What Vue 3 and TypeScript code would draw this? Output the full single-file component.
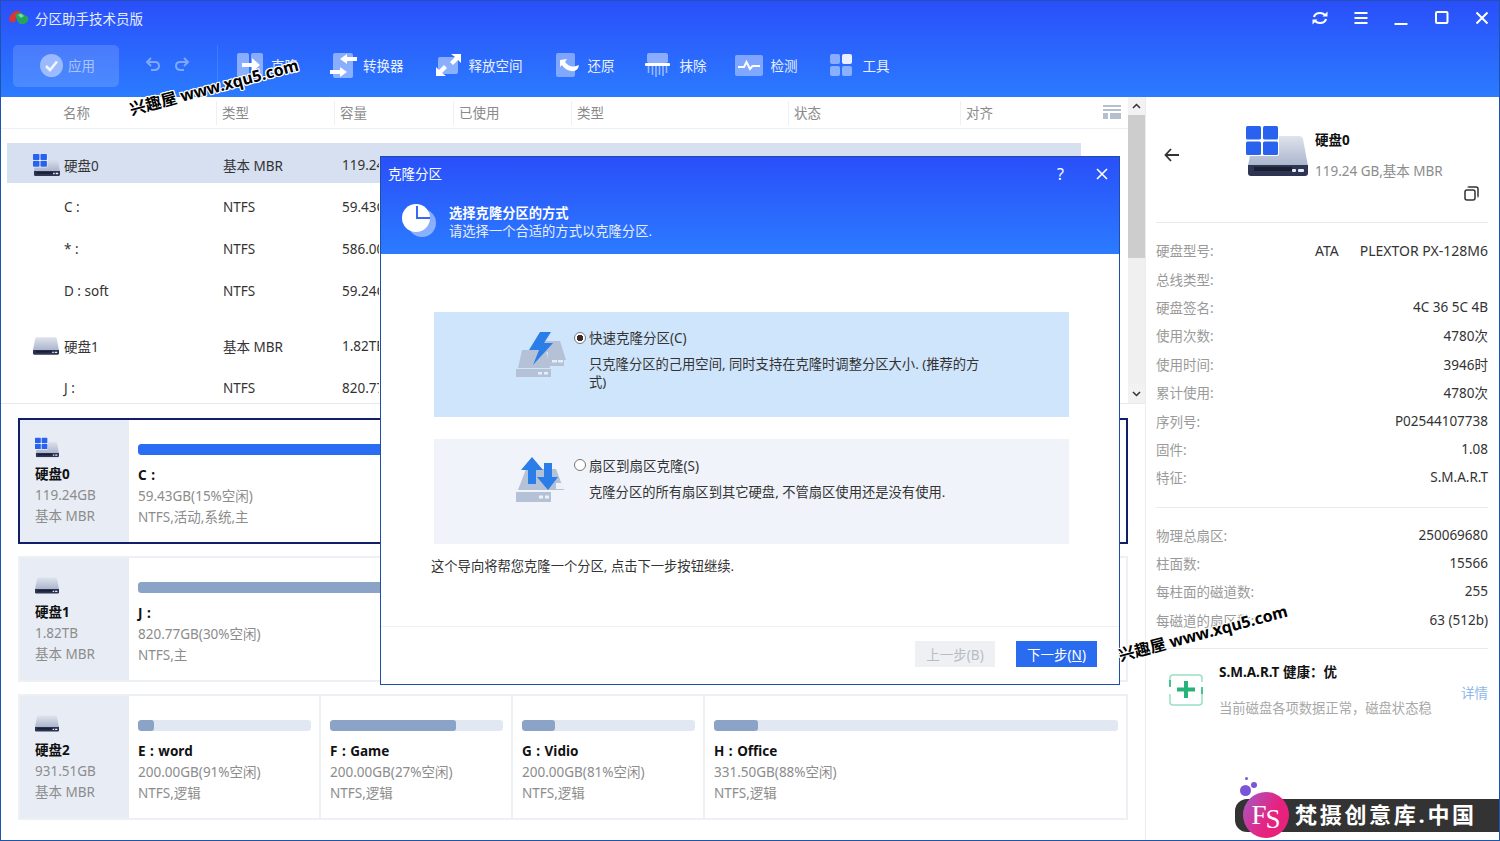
<script setup lang="ts">
const columns = ['名称', '类型', '容量', '已使用', '类型', '状态', '对齐']

const rows = [
  { name: '硬盘0', type: '基本 MBR', size: '119.24GB', icon: 'win', selected: true },
  { name: 'C :', type: 'NTFS', size: '59.43GB' },
  { name: '* :', type: 'NTFS', size: '586.00MB' },
  { name: 'D : soft', type: 'NTFS', size: '59.24GB', last: true },
  { name: '硬盘1', type: '基本 MBR', size: '1.82TB', icon: 'disk' },
  { name: 'J :', type: 'NTFS', size: '820.77GB' },
]

const disks = [
  {
    name: '硬盘0', size: '119.24GB', win: true, selected: true,
    parts: [{ name: 'C :', size: '59.43GB(15%空闲)', info: 'NTFS,活动,系统,主', used: 85, color: '#2a6df4' }],
  },
  {
    name: '硬盘1', size: '1.82TB',
    parts: [{ name: 'J :', size: '820.77GB(30%空闲)', info: 'NTFS,主', used: 70, color: '#8aa3c6' }],
  },
  {
    name: '硬盘2', size: '931.51GB',
    parts: [
      { name: 'E : word', size: '200.00GB(91%空闲)', info: 'NTFS,逻辑', used: 9, color: '#8aa3c6' },
      { name: 'F : Game', size: '200.00GB(27%空闲)', info: 'NTFS,逻辑', used: 73, color: '#8aa3c6' },
      { name: 'G : Vidio', size: '200.00GB(81%空闲)', info: 'NTFS,逻辑', used: 19, color: '#8aa3c6' },
      { name: 'H : Office', size: '331.50GB(88%空闲)', info: 'NTFS,逻辑', used: 11, color: '#8aa3c6' },
    ],
  },
]

const diskInfo = [
  ['硬盘型号:', 'ATA', 'PLEXTOR PX-128M6'],
  ['总线类型:', '', ''],
  ['硬盘签名:', '', '4C 36 5C 4B'],
  ['使用次数:', '', '4780次'],
  ['使用时间:', '', '3946时'],
  ['累计使用:', '', '4780次'],
  ['序列号:', '', 'P02544107738'],
  ['固件:', '', '1.08'],
  ['特征:', '', 'S.M.A.R.T'],
]

const geometry = [
  ['物理总扇区:', '250069680'],
  ['柱面数:', '15566'],
  ['每柱面的磁道数:', '255'],
  ['每磁道的扇区数:', '63 (512b)'],
]
</script>

<template>
  <div class="window">
    <!-- shared drive drawings -->
    <svg class="defs" width="0" height="0">
      <defs>
        <linearGradient id="diskBody" x1="0" y1="0" x2="0" y2="1">
          <stop offset="0" stop-color="#dfe3ec" />
          <stop offset="1" stop-color="#a9b4cc" />
        </linearGradient>
        <symbol id="disk" viewBox="0 0 60 40">
          <path d="M9 0H51Q54 0 55 3L60 30H0L5 3Q6 0 9 0Z" fill="url(#diskBody)" />
          <path d="M0 29H60V37Q60 40 57 40H3Q0 40 0 37Z" fill="#2e3552" />
          <rect x="6" y="31" width="38" height="4" fill="#1a1f33" />
          <rect x="44" y="33" width="4" height="3" rx="1" fill="#e8ebf2" />
          <rect x="50" y="33" width="6" height="3" rx="1" fill="#e8ebf2" />
        </symbol>
        <symbol id="diskWin" viewBox="0 0 62 50">
          <use href="#disk" x="2" y="10" width="60" height="40" />
          <rect x="0" y="0" width="33" height="30" rx="2" fill="#fff" />
          <rect x="0" y="0" width="15" height="13.5" rx="1.5" fill="#2a62f0" />
          <rect x="17" y="0" width="15" height="13.5" rx="1.5" fill="#2a62f0" />
          <rect x="0" y="15.5" width="15" height="13.5" rx="1.5" fill="#2a62f0" />
          <rect x="17" y="15.5" width="15" height="13.5" rx="1.5" fill="#2a62f0" />
        </symbol>
      </defs>
    </svg>

    <header class="top">
      <div class="titlebar">
        <svg class="logo" width="20" height="16" viewBox="0 0 20 16">
          <path d="M0 10Q1 3 7 1Q11 0 12 3L7 7L6 12Q2 13 0 10Z" fill="#e0322f" />
          <path d="M6 5Q10 1 14 4L19 7Q20 11 17 13Q12 16 9 12Z" fill="#23a55a" />
          <path d="M9 5L12 3.500L15 6L12 8Z" fill="#7fd6a0" />
        </svg>
        <span class="app-name">分区助手技术员版</span>
        <div class="controls">
          <svg width="18" height="18" viewBox="0 0 18 18" fill="none" stroke="#fff" stroke-width="2.200">
            <path d="M3 8Q4 4 9 4Q12 4 14 6" />
            <path d="M15 10Q14 14 9 14Q6 14 4 12" />
            <path d="M11.500 7.500H16.500V2.500Z" fill="#fff" stroke="none" />
            <path d="M6.500 10.500H1.500V15.500Z" fill="#fff" stroke="none" />
          </svg>
          <svg width="18" height="18" viewBox="0 0 18 18" stroke="#fff" stroke-width="2">
            <path d="M2.500 4H15.500M2.500 9H15.500M2.500 14H15.500" />
          </svg>
          <svg width="18" height="18" viewBox="0 0 18 18" stroke="#fff" stroke-width="2">
            <path d="M2.500 15H15.500" />
          </svg>
          <svg width="18" height="18" viewBox="0 0 18 18" fill="none" stroke="#fff" stroke-width="2">
            <rect x="3" y="3" width="11.500" height="11" rx="1" />
          </svg>
          <svg width="18" height="18" viewBox="0 0 18 18" stroke="#fff" stroke-width="2">
            <path d="M3.500 3.500L14.500 14.500M14.500 3.500L3.500 14.500" />
          </svg>
        </div>
      </div>

      <div class="toolbar">
        <button class="apply">
          <svg width="23" height="23" viewBox="0 0 23 23">
            <circle cx="11.500" cy="11.500" r="11.500" fill="#fff" fill-opacity=".45" />
            <path d="M6 12L10 16L17 7.500" fill="none" stroke="#fff" stroke-opacity=".85" stroke-width="2.600" />
          </svg>
          <span>应用</span>
        </button>
        <div class="history">
          <svg width="16" height="14" viewBox="0 0 16 14" fill="none" stroke="#fff" stroke-opacity=".4" stroke-width="2">
            <path d="M6 1L2 5L6 9M2 5H10Q14 5 14 9Q14 13 9 13H6" />
          </svg>
          <svg width="16" height="14" viewBox="0 0 16 14" fill="none" stroke="#fff" stroke-opacity=".4" stroke-width="2">
            <path d="M10 1L14 5L10 9M14 5H6Q2 5 2 9Q2 13 7 13H10" />
          </svg>
        </div>
        <div class="tool-sep"></div>

        <div class="tools">
          <div class="tool">
            <svg width="26" height="24" viewBox="0 0 26 24">
              <rect x="0" y="0" width="12" height="24" rx="2" fill="#fff" fill-opacity=".45" />
              <rect x="14" y="0" width="12" height="24" rx="2" fill="#fff" fill-opacity=".45" />
              <path d="M5 10H15V5L23 12L15 19V14H5Z" fill="#fff" />
            </svg>
            <span>克隆</span>
          </div>
          <div class="tool convert">
            <svg width="27" height="25" viewBox="0 0 27 25">
              <rect x="3" y="0" width="20" height="25" rx="2" fill="#fff" fill-opacity=".45" />
              <path d="M27 4H17V1L10 6L17 11V8H27Z" fill="#fff" />
              <path d="M0 17H10V14L17 19L10 24V21H0Z" fill="#fff" />
            </svg>
            <span>转换器</span>
          </div>
          <div class="tool">
            <svg width="25" height="22" viewBox="0 0 25 22">
              <rect x="2" y="3" width="20" height="17" rx="2" fill="#fff" fill-opacity=".45" />
              <path d="M15 0H25V9L22 6L17 11L14 8L19 3Z" fill="#fff" />
              <path d="M10 22H0V13L3 16L8 11L11 14L6 19Z" fill="#fff" />
            </svg>
            <span>释放空间</span>
          </div>
          <div class="tool restore">
            <svg width="24" height="24" viewBox="0 0 24 24">
              <rect x="0" y="0" width="19" height="24" rx="2" fill="#fff" fill-opacity=".4" />
              <path d="M4 7L11 6L9 9Q14 15 20 13L23 12Q22 19 15 18Q9 17 6 12L4 14Z" fill="#fff" />
            </svg>
            <span>还原</span>
          </div>
          <div class="tool erase">
            <svg width="25" height="24" viewBox="0 0 25 24">
              <rect x="2" y="0" width="21" height="10" rx="2" fill="#fff" fill-opacity=".45" />
              <rect x="0" y="10" width="25" height="3" rx="1" fill="#fff" />
              <path d="M3.500 13V20M7.500 13V22M11 13V24M14.500 13V22M18 13V23M21.500 13V20" stroke="#fff" stroke-opacity=".5" stroke-width="1.600" />
            </svg>
            <span>抹除</span>
          </div>
          <div class="tool detect">
            <svg width="28" height="21" viewBox="0 0 28 21">
              <rect x="0" y="0" width="28" height="21" rx="2" fill="#fff" fill-opacity=".4" />
              <path d="M3 12H9L11.500 7L15 14L17.500 11H25" fill="none" stroke="#fff" stroke-width="2" />
            </svg>
            <span>检测</span>
          </div>
          <div class="tool kit">
            <svg width="22" height="22" viewBox="0 0 22 22">
              <rect x="0" y="0" width="10" height="10" rx="2" fill="#fff" fill-opacity=".45" />
              <rect x="12" y="0" width="10" height="10" rx="2" fill="#fff" fill-opacity=".9" />
              <rect x="0" y="12" width="10" height="10" rx="2" fill="#fff" fill-opacity=".45" />
              <rect x="12" y="12" width="10" height="10" rx="2" fill="#fff" fill-opacity=".45" />
            </svg>
            <span>工具</span>
          </div>
        </div>
      </div>
    </header>

    <main class="body">
      <section class="left">
        <div class="table-zone">
          <div class="table">
            <div class="thead">
              <div v-for="(c, i) in columns" :key="i" class="th">{{ c }}</div>
              <svg class="col-btn" width="18" height="14" viewBox="0 0 18 14" fill="#b4c0d0">
                <rect width="18" height="2" />
                <rect y="4" width="18" height="2" />
                <rect y="8" width="5" height="6" />
                <rect x="7" y="8" width="11" height="6" />
              </svg>
            </div>
            <div class="tbody">
              <div
                v-for="r in rows"
                :key="r.name"
                class="row"
                :class="{ selected: r.selected, last: r.last }"
              >
                <div class="name-cell">
                  <span class="row-icon">
                    <svg v-if="r.icon === 'win'" width="27" height="22"><use href="#diskWin" /></svg>
                    <svg v-else-if="r.icon === 'disk'" width="26" height="18"><use href="#disk" /></svg>
                  </span>
                  {{ r.name }}
                </div>
                <div>{{ r.type }}</div>
                <div class="size-cell">{{ r.size }}</div>
              </div>
            </div>
          </div>
          <div class="scrollbar">
            <svg class="arrow" width="17" height="18" viewBox="0 0 17 18" fill="none" stroke="#333" stroke-width="1.500">
              <path d="M5 11L8.500 7.500L12 11" />
            </svg>
            <div class="thumb"></div>
            <div class="track"></div>
            <svg class="arrow" width="17" height="19" viewBox="0 0 17 19" fill="none" stroke="#333" stroke-width="1.500">
              <path d="M5 8L8.500 11.500L12 8" />
            </svg>
          </div>
        </div>

        <div class="cards">
          <div v-for="d in disks" :key="d.name" class="card" :class="{ selected: d.selected }">
            <div class="card-head">
              <svg v-if="d.win" class="card-icon" width="24" height="21"><use href="#diskWin" /></svg>
              <svg v-else class="card-icon" width="24" height="21" viewBox="0 0 24 21"><use href="#disk" y="2" width="24" height="17" /></svg>
              <b>{{ d.name }}</b>
              <span>{{ d.size }}</span>
              <span>基本 MBR</span>
            </div>
            <div
              v-for="p in d.parts"
              :key="p.name"
              class="part"
            >
              <div class="bar"><i :style="{ width: p.used + '%', background: p.color }"></i></div>
              <b>{{ p.name }}</b>
              <span>{{ p.size }}</span>
              <span>{{ p.info }}</span>
            </div>
          </div>
        </div>
      </section>

      <aside class="panel">
        <div class="panel-head">
          <svg class="back" width="16" height="14" viewBox="0 0 16 14" fill="none" stroke="#333" stroke-width="1.800">
            <path d="M7 1L1.500 7L7 13M1.500 7H15" />
          </svg>
          <svg class="panel-disk" width="62" height="50"><use href="#diskWin" /></svg>
          <div class="panel-title">
            <b>硬盘0</b>
            <span>119.24 GB,基本 MBR</span>
            <svg class="copy" width="15" height="15" viewBox="0 0 15 15" fill="none" stroke="#333" stroke-width="1.500">
              <rect x="1" y="4" width="10" height="10" rx="2" />
              <path d="M4 1.500Q4 1 5 1H12Q14 1 14 3V10Q14 11 13.500 11" />
            </svg>
          </div>
        </div>

        <div class="info-group first">
          <div v-for="item in diskInfo" :key="item[0]" class="info-row">
            <span class="label">{{ item[0] }}</span>
            <span v-if="item[1]" class="mid">{{ item[1] }}</span>
            <span class="value" :class="{ tight: item[1] }">{{ item[2] }}</span>
          </div>
        </div>
        <div class="info-group">
          <div v-for="item in geometry" :key="item[0]" class="info-row">
            <span class="label">{{ item[0] }}</span>
            <span class="value">{{ item[1] }}</span>
          </div>
        </div>

        <div class="smart">
          <svg class="smart-icon" width="34" height="32" viewBox="0 0 34 32" fill="none">
            <path d="M1 12V4Q1 1 4 1H30Q33 1 33 4V8" stroke="#9be0c4" stroke-width="1.500" />
            <path d="M33 16V28Q33 31 30 31H4Q1 31 1 28V20" stroke="#9be0c4" stroke-width="1.500" />
            <path d="M1 6V13M33 13V20" stroke="#25b37a" stroke-width="1.500" />
            <path d="M17 7V24M8 15.500H26" stroke="#25b37a" stroke-width="4" />
          </svg>
          <div class="smart-text">
            <b>S.M.A.R.T 健康：优</b>
            <span>当前磁盘各项数据正常，磁盘状态稳</span>
          </div>
          <a class="more">详情</a>
        </div>
      </aside>
    </main>

    <!-- clone dialog -->
    <div class="dialog">
      <div class="dialog-top">
        <div class="dialog-title">
          <span class="dialog-name">克隆分区</span>
          <span class="help">?</span>
          <svg width="12" height="12" viewBox="0 0 12 12" stroke="#fff" stroke-width="1.600">
            <path d="M1 1L11 11M11 1L1 11" />
          </svg>
        </div>
        <div class="dialog-sub">
          <svg width="34" height="33" viewBox="0 0 34 33">
            <circle cx="20" cy="19" r="14" fill="#fff" fill-opacity=".45" />
            <circle cx="14" cy="14" r="14" fill="#fff" />
            <path d="M15 2V14H28" fill="none" stroke="#3a68f0" stroke-width="2" />
          </svg>
          <div>
            <b>选择克隆分区的方式</b>
            <p>请选择一个合适的方式以克隆分区.</p>
          </div>
        </div>
      </div>

      <div class="dialog-body">
        <div class="option active">
          <svg class="option-icon" width="50" height="48" viewBox="0 0 50 48">
            <path d="M26 11H44L50 30H48V36H32V22H24Z" fill="#b4c1d6" />
            <rect x="36" y="30" width="5" height="2.500" fill="#e6eef8" />
            <rect x="42" y="30" width="5" height="2.500" fill="#e6eef8" />
            <path d="M6 20H30L34 38H2Z" fill="#b4c1d6" />
            <rect x="0" y="39" width="35" height="8" fill="#b4c1d6" />
            <rect x="22" y="42" width="4" height="2.500" fill="#e6eef8" />
            <rect x="28" y="42" width="4" height="2.500" fill="#e6eef8" />
            <path d="M24 2H35L28 13H37L17 35L23 20H13Z" fill="#2b7de8" />
          </svg>
          <span class="radio on"></span>
          <div class="option-text">
            <span>快速克隆分区(C)</span>
            <p>只克隆分区的己用空间, 同时支持在克隆时调整分区大小. (推荐的方式)</p>
          </div>
        </div>

        <div class="option">
          <svg class="option-icon" width="50" height="48" viewBox="0 0 50 48">
            <path d="M10 12H40L48 33H2Z" fill="#b4c1d6" />
            <rect x="40" y="26" width="8" height="6" fill="#eef2f8" />
            <rect x="0" y="35" width="35" height="10" fill="#b4c1d6" />
            <rect x="23" y="38.500" width="4" height="3" fill="#eef2f8" />
            <rect x="29" y="38.500" width="4" height="3" fill="#eef2f8" />
            <path d="M16 0L27 13H20V27H12V13H5Z" fill="#2b7de8" />
            <path d="M32 33L42 20H36V6H28V20H21Z" fill="#2b7de8" />
          </svg>
          <span class="radio"></span>
          <div class="option-text">
            <span>扇区到扇区克隆(S)</span>
            <p>克隆分区的所有扇区到其它硬盘, 不管扇区使用还是没有使用.</p>
          </div>
        </div>

        <p class="hint">这个导向将帮您克隆一个分区, 点击下一步按钮继续.</p>
      </div>

      <div class="dialog-foot">
        <button class="btn prev">上一步(B)</button>
        <button class="btn next">下一步(<u>N</u>)</button>
      </div>
    </div>

    <!-- watermarks sit over everything -->
    <div class="stamp one">兴趣屋 www.xqu5.com</div>
    <div class="stamp two">兴趣屋 www.xqu5.com</div>

    <div class="badge">
      <i class="dot d1"></i>
      <i class="dot d2"></i>
      <i class="dot d3"></i>
      <div class="circle"><span>F</span><span class="s">S</span></div>
      <span class="badge-text">梵摄创意库.中国</span>
    </div>
  </div>
</template>

<style scoped>
* {
  box-sizing: border-box;
}

.window {
  position: relative;
  width: 1500px;
  height: 841px;
  overflow: hidden;
  display: flex;
  flex-direction: column;
  background: #fff;
  border: 1px solid #1c55ae;
  border-top: 0;
  color: #333;
  font-family: "Noto Sans", "Noto Sans CJK SC", sans-serif;
  font-size: 13.5px;
}

.defs {
  position: absolute;
}

.top {
  height: 97px;
  flex: none;
  color: #fff;
  background: linear-gradient(#2a4ffa, #2b7bff);
  border-top: 1px solid #2450b8;
}

.titlebar {
  height: 33px;
  display: flex;
  align-items: center;
  padding-left: 8px;
}

.logo {
  margin-right: 6px;
}

.app-name {
  color: #e6edff;
}

.controls {
  margin-left: auto;
  display: flex;
  gap: 22.5px;
  padding-right: 8px;
}

.toolbar {
  display: flex;
  align-items: flex-start;
  padding: 11px 0 0 12px;
}

.apply {
  width: 106px;
  height: 42px;
  display: flex;
  align-items: center;
  gap: 5px;
  padding: 0 0 2px 27px;
  border: 0;
  border-radius: 5px;
  background: rgba(255, 255, 255, 0.15);
  color: rgba(255, 255, 255, 0.55);
  font: inherit;
}

.history {
  display: flex;
  gap: 13px;
  margin: 12px 0 0 26px;
}

.tool-sep {
  width: 1px;
  height: 42px;
  margin-left: 27px;
  background: rgba(255, 255, 255, 0.12);
}

.tools {
  display: flex;
  align-items: center;
  gap: 32px;
  height: 42px;
  margin: -1px 0 0 19px;
}

.tool {
  display: flex;
  align-items: center;
  gap: 8px;
  color: #eaf0ff;
}

.convert {
  gap: 6px;
}

.restore {
  margin-left: 1px;
}

.erase {
  margin-left: -2px;
  gap: 10px;
}

.detect {
  margin-left: -4px;
}

.kit {
  gap: 11px;
}

.body {
  flex: 1;
  display: flex;
  min-height: 0;
}

.left {
  width: 1144px;
  flex: none;
}

.table-zone {
  display: flex;
  height: 307px;
  border-bottom: 1px solid #e6e9ee;
}

.table {
  width: 1127px;
  flex: none;
  overflow: hidden;
}

.thead {
  position: relative;
  height: 32px;
  display: grid;
  grid-template-columns: 215px 118px 119px 118px 217px 172px 1fr;
  align-items: center;
  border-bottom: 1px solid #edf0f4;
  color: #8a8a8a;
}

.th {
  height: 24px;
  line-height: 24px;
  padding-left: 5px;
  border-left: 1px solid #eef0f3;
}

.th:first-child {
  padding-left: 62px;
  border-left: 0;
}

.col-btn {
  position: absolute;
  left: 1102px;
  top: 8px;
}

.tbody {
  padding: 14px 47px 0 6px;
  height: 274px;
  overflow: hidden;
}

.row {
  display: grid;
  grid-template-columns: 216px 119px 1fr;
  align-items: center;
  height: 42px;
}

.row.selected {
  height: 40px;
  padding-top: 3px;
  margin-bottom: 3px;
  background: #d6e0f0;
}

.row.last {
  margin-bottom: 13px;
}

.name-cell {
  display: flex;
  align-items: center;
  padding-left: 26px;
}

.row-icon {
  width: 31px;
  flex: none;
  display: flex;
  align-items: center;
}

.row-icon svg {
  display: block;
}

/* the dialog covers the rest of the table, nothing past its edge is seen */
.size-cell {
  width: 37px;
  overflow: hidden;
  white-space: nowrap;
}

.scrollbar {
  width: 17px;
  display: flex;
  flex-direction: column;
  background: #f0f0f0;
}

.arrow {
  display: block;
  flex: none;
  background: #f2f2f2;
}

.thumb {
  height: 143px;
  background: #cdcdcd;
}

.track {
  flex: 1;
}

.cards {
  padding: 14px 0 0 17px;
  display: flex;
  flex-direction: column;
  gap: 12px;
}

.card {
  width: 1110px;
  height: 126px;
  display: flex;
  border: 2px solid #edf0f5;
  background: #fff;
}

.card.selected {
  border-color: #111f6b;
}

.card-head {
  width: 109px;
  flex: none;
  display: flex;
  flex-direction: column;
  justify-content: center;
  padding: 2px 0 0 15px;
  background: #e8ecf4;
  line-height: 21px;
  color: #8c8c8c;
}

.card-head b {
  color: #111;
}

.card-icon {
  margin-bottom: 6px;
}

.part {
  width: 192px;
  flex: none;
  display: flex;
  flex-direction: column;
  padding: 24px 8px 0 9px;
  line-height: 21px;
  color: #8c8c8c;
  border-right: 2px solid #edf0f5;
}

.part:last-child {
  flex: 1;
  border-right: 0;
}

.part b {
  margin-top: 10px;
  color: #111;
  word-spacing: 1px;
}

.bar {
  height: 11px;
  border-radius: 3px;
  background: #e1e8f2;
  overflow: hidden;
}

.bar i {
  display: block;
  height: 100%;
  border-radius: 3px;
}

.panel {
  flex: 1;
  padding: 0 11px 0 10px;
  border-left: 1px solid #e9ecf1;
}

.panel-head {
  height: 126px;
  display: flex;
  align-items: flex-start;
  border-bottom: 1px solid #e8eaef;
}

.back {
  margin: 51px 0 0 8px;
}

.panel-disk {
  margin: 29px 0 0 66px;
}

.panel-title {
  display: flex;
  flex-direction: column;
  margin: 33px 0 0 7px;
  width: 164px;
  color: #8c8c8c;
}

.panel-title b {
  color: #111;
  line-height: 20px;
}

.panel-title span {
  margin-top: 11px;
  line-height: 20px;
}

.copy {
  align-self: flex-end;
  margin-top: 5px;
}

.info-group {
  padding: 13px 0 14px;
  border-bottom: 1px solid #e8eaef;
}

.info-group.first {
  padding-bottom: 15px;
}

.info-row {
  height: 28.4px;
  display: flex;
  align-items: center;
  color: #9a9a9a;
}

.mid {
  margin-left: auto;
  color: #333;
  font-size: 14px;
}

.value {
  margin-left: auto;
  color: #333;
  white-space: nowrap;
}

.value.tight {
  margin-left: 21px;
  font-size: 14px;
}

.smart {
  display: flex;
  align-items: flex-start;
  padding: 13px 0 0 13px;
}

.smart-icon {
  flex: none;
  margin-top: 12px;
}

.smart-text {
  display: flex;
  flex-direction: column;
  gap: 16px;
  margin-left: 16px;
  color: #a8a8a8;
  line-height: 20px;
}

.smart-text span {
  font-size: 13.3px;
}

.smart-text b {
  color: #111;
}

.more {
  margin: 20px 0 0 auto;
  color: #8fb8ea;
}

.dialog {
  position: absolute;
  left: 379px;
  top: 156px;
  width: 740px;
  height: 529px;
  display: flex;
  flex-direction: column;
  background: #fff;
  border: 1px solid #1d4ea8;
}

.dialog-top {
  height: 97px;
  flex: none;
  color: #fff;
  background: linear-gradient(#2a4ffa, #2b7bff);
}

.dialog-title {
  height: 34px;
  display: flex;
  align-items: center;
  padding: 0 11px 0 7px;
}

.dialog-name {
  margin-top: -3px;
}

.help {
  margin: 0 32px 0 auto;
  font-size: 16px;
}

.dialog-sub {
  display: flex;
  align-items: flex-start;
  padding: 13px 0 0 21px;
  line-height: 18px;
  font-size: 13.3px;
}

.dialog-sub > div {
  margin-left: 13px;
}

.dialog-sub p {
  margin: 0;
  color: #e8eeff;
}

.dialog-body {
  flex: 1;
  padding: 58px 50px 0 53px;
}

.option {
  height: 105px;
  display: flex;
  align-items: flex-start;
  padding: 18px 0 0 82px;
  margin-bottom: 22px;
  background: #f0f3f9;
}

.option.active {
  background: #cfe5fb;
}

.option-icon {
  flex: none;
}

.radio {
  flex: none;
  width: 12px;
  height: 12px;
  margin: 2px 3px 0 8px;
  border: 1px solid #777;
  border-radius: 50%;
  background: #fff;
}

.radio.on {
  background: radial-gradient(circle, #3a2a2a 0 3px, #fff 3.500px);
}

.option-text {
  width: 395px;
  line-height: 18px;
  margin-top: 0;
}

.option.active .option-text {
  margin-top: -1px;
}

.option-text p {
  margin: 8px 0 0;
  font-size: 13.3px;
}

.hint {
  margin: -10px 0 0 -3px;
  line-height: 20px;
  font-size: 13.3px;
}

.dialog-foot {
  height: 58px;
  flex: none;
  display: flex;
  justify-content: flex-end;
  gap: 21px;
  padding: 14px 22px 0 0;
  border-top: 1px solid #edf0f4;
}

.btn {
  height: 26px;
  border: 0;
  font: inherit;
  padding: 0;
}

.prev {
  width: 80px;
  background: #eef0f4;
  color: #b8bcc4;
}

.next {
  width: 81px;
  background: #2a6cf0;
  color: #fff;
}

.stamp {
  position: absolute;
  transform: rotate(-15deg);
  color: #000;
  font-size: 16px;
  font-weight: 700;
  line-height: 22px;
  white-space: nowrap;
  text-shadow: 1px 0 #fff, -1px 0 #fff, 0 1px #fff, 0 -1px #fff, 1px 1px #fff, -1px -1px #fff, 1px -1px #fff, -1px 1px #fff;
}

.stamp.one {
  left: 126px;
  top: 76px;
}

.stamp.two {
  left: 1115px;
  top: 622px;
}

.badge {
  position: absolute;
  left: 1234px;
  top: 799px;
  width: 265px;
  height: 33px;
  display: flex;
  align-items: center;
  padding-left: 60px;
  background: #333;
  border-radius: 12px 0 0 12px;
}

.badge-text {
  margin-top: -5px;
  color: #fff;
  font-size: 22px;
  font-weight: 700;
  letter-spacing: 2.700px;
  white-space: nowrap;
}

.circle {
  position: absolute;
  left: 8px;
  top: -7px;
  width: 46px;
  height: 46px;
  display: flex;
  justify-content: center;
  align-items: center;
  border-radius: 50%;
  background: linear-gradient(120deg, #a25cc8, #e8217f 60%);
  color: #fff;
  font-family: "Liberation Serif", serif;
  font-size: 27px;
  line-height: 1;
}

.circle .s {
  margin: 8px 0 0 -1px;
}

.dot {
  position: absolute;
  border-radius: 50%;
  background: #7a55d8;
}

.d1 {
  left: 5px;
  top: -14px;
  width: 11px;
  height: 11px;
}

.d2 {
  left: 16px;
  top: -17px;
  width: 6px;
  height: 6px;
}

.d3 {
  left: 10px;
  top: -22px;
  width: 3px;
  height: 3px;
}
</style>

<style>
html,
body {
  margin: 0;
  overflow: hidden;
}
</style>
